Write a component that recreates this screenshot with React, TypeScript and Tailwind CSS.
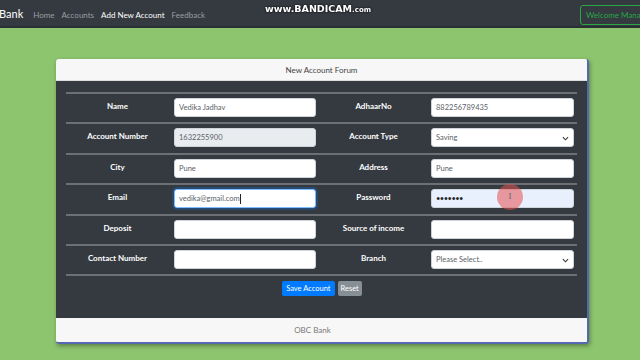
import React from 'react';

const rows = [
  ['Name', 'Vedika Jadhav', 'AdhaarNo', '882256789435'],
  ['Account Number', '1632255900', 'Account Type', 'Saving'],
  ['City', 'Pune', 'Address', 'Pune'],
  ['Email', 'vedika@gmail.com', 'Password', '•••••••'],
  ['Deposit', '', 'Source of income', ''],
  ['Contact Number', '', 'Branch', 'Please Select..'],
];

const Chevron = () => (
  <svg width="7" height="5" viewBox="0 0 8 5" className="absolute right-[4px] top-[7px]">
    <path d="M1 1l3 3 3-3" fill="none" stroke="#333" strokeWidth="1.2" />
  </svg>
);

const Field: React.FC<{ label: string; value: string }> = ({ label, value }) => {
  let cls = 'bg-white border-[#ced4da]';
  if (label === 'Account Number') cls = 'bg-[#e9ecef] border-[#ced4da]';
  if (label === 'Email') cls = 'bg-white border-[#80bdff] shadow-[0_0_0_2px_rgba(0,123,255,0.25)]';
  if (label === 'Password') cls = 'bg-[#e8f0fe] border-[#ced4da]';
  const isSelect = label === 'Account Type' || label === 'Branch';
  return (
    <div className={`relative h-[19px] rounded-[3px] border ${cls} flex items-center pl-[4px] text-[7.5px] text-[#5a6168]`}>
      <span className={label === 'Password' ? 'text-[#222] tracking-[-0.5px]' : ''}>{value}</span>
      {label === 'Email' && <span className="w-px h-[10px] bg-[#222]" />}
      {isSelect && <Chevron />}
    </div>
  );
};

export default function App() {
  return (
    <div className="relative w-[640px] h-[360px] overflow-hidden bg-[#8dc46e] font-['Lato','Open_Sans',sans-serif]">
      {/* Navbar */}
      <div className="h-[28px] bg-[#343a40] border-b-2 border-[#2a2f33] flex items-center pt-[3px]">
        <span className="text-white text-[11px] -ml-[1px] mr-[10px]">Bank</span>
        <div className="flex gap-[7px] text-[8px] text-[#9a9ea2]">
          <span>Home</span>
          <span>Accounts</span>
          <span className="text-white">Add New Account</span>
          <span>Feedback</span>
        </div>
        <div className="ml-auto -mr-[18px] h-[20px] px-[5px] border border-[#28a745] rounded-[3px] text-[#28a745] text-[8px] flex items-center whitespace-nowrap">
          Welcome Manager
        </div>
      </div>

      {/* Card */}
      <div className="ml-[56px] mt-[31px] w-[533px] border-r-2 border-b-2 border-[#5567b0] rounded-[3px] shadow-[1px_2px_4px_rgba(0,0,0,0.35)] overflow-hidden">
        <div className="h-[22px] bg-[#f7f7f7] border-b border-[#ddd] flex items-center justify-center text-[8px] text-[#444]">
          New Account Forum
        </div>
        <div className="bg-[#343a40] h-[237px] pt-[11px] px-[10px]">
          <div className="border-t-2 border-[#6c7075]">
            {rows.map((r) => (
              <div key={r[0]} className="grid grid-cols-[103px_152px_105px_153px] h-[30.4px] border-b-2 border-[#6c7075]">
                <div className="text-center text-white font-bold text-[8px] pt-[6px]">{r[0]}</div>
                <div className="px-[5px] pt-[4px]"><Field label={r[0]} value={r[1]} /></div>
                <div className="text-center text-white font-bold text-[8px] pt-[6px]">{r[2]}</div>
                <div className="px-[5px] pt-[4px]"><Field label={r[2]} value={r[3]} /></div>
              </div>
            ))}
          </div>
          <div className="flex justify-center gap-[3px] mt-[5px] pl-[1px]">
            <div className="h-[15px] px-[4px] bg-[#007bff] rounded-[2px] text-white text-[7.5px] flex items-center">Save Account</div>
            <div className="h-[15px] px-[3px] bg-[#868e96] rounded-[2px] text-white text-[7.5px] flex items-center">Reset</div>
          </div>
        </div>
        <div className="h-[24px] bg-[#f7f7f7] flex items-center justify-center pr-[18px] text-[8px] text-[#777]">
          OBC Bank
        </div>
      </div>

      {/* screen recorder watermark */}
      <div className="absolute left-[265px] top-[2px] text-white text-[9.5px] font-bold font-['DejaVu_Sans',sans-serif] drop-shadow-[0_0_1px_#000]">
        www.BANDICAM<span className="text-[7px]">.com</span>
      </div>

      {/* cursor highlight */}
      <div className="absolute left-[497px] top-[184px] w-[26px] h-[26px] rounded-full bg-[rgba(230,80,80,0.55)] flex items-center justify-center">
        <span className="text-[#666] text-[9px] font-['Liberation_Serif',serif]">I</span>
      </div>
    </div>
  );
}
